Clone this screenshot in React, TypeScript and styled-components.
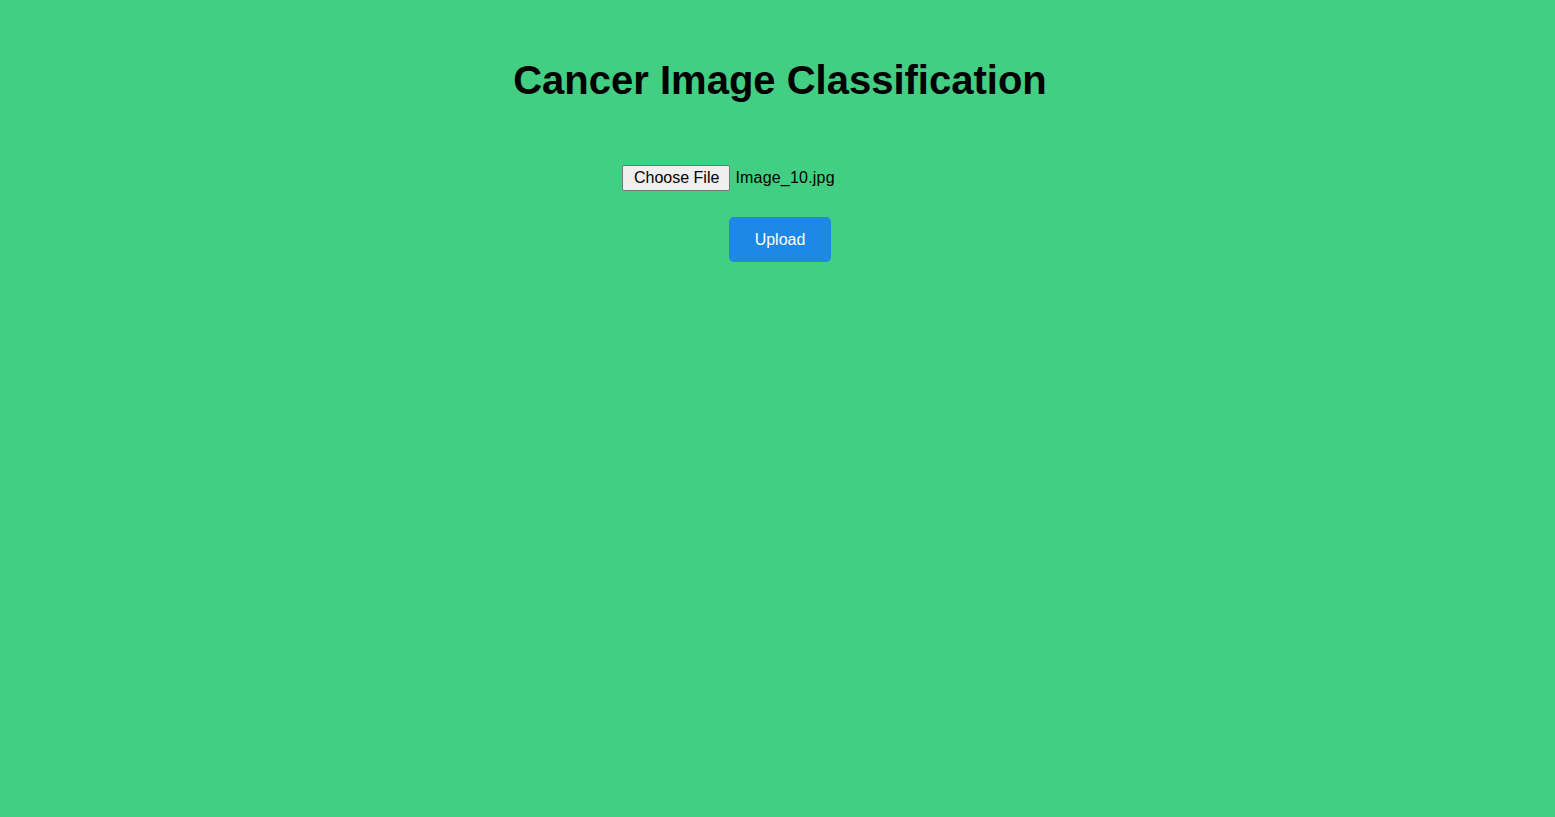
import React from "react";
import styled, { createGlobalStyle } from "styled-components";

const GlobalStyle = createGlobalStyle`
  html, body {
    margin: 0;
    padding: 0;
    background: #43cf83;
    font-family: "Liberation Sans", Arial, sans-serif;
  }
`;

const Page = styled.main`
  min-height: 817px;
  padding: 57px 0 0 5px;
  box-sizing: border-box;
  display: flex;
  flex-direction: column;
  align-items: center;
  color: #000;
`;

const Title = styled.h1`
  margin: 0;
  font-size: 40px;
  font-weight: 700;
  line-height: 46px;
`;

const Form = styled.form`
  margin-top: 62px;
  display: flex;
  flex-direction: column;
  align-items: center;
  gap: 26px;
`;

const FileRow = styled.label`
  width: 316px;
  display: flex;
  align-items: center;
  gap: 5px;
  font-size: 16px;
  cursor: default;
`;

const ChooseButton = styled.span`
  display: inline-block;
  padding: 3px 10px 3px 11px;
  line-height: 18px;
  background: #efefef;
  border: 1px solid #767676;
  border-radius: 2px;
  color: #000;
  font-size: 16px;
`;

const FileName = styled.span`
  line-height: 18px;
  letter-spacing: 0.2px;
`;

const UploadButton = styled.button`
  padding: 13px 26px;
  line-height: 19px;
  font-size: 16px;
  font-family: "Liberation Sans", Arial, sans-serif;
  color: #fff;
  background: #1e88e5;
  border: none;
  border-radius: 5px;
  cursor: pointer;
`;

export default function App() {
  return (
    <>
      <GlobalStyle />
      <Page>
        <Title>Cancer Image Classification</Title>
        <Form onSubmit={(e) => e.preventDefault()}>
          <FileRow>
            <ChooseButton>Choose File</ChooseButton>
            <FileName>Image_10.jpg</FileName>
          </FileRow>
          <UploadButton type="submit">Upload</UploadButton>
        </Form>
      </Page>
    </>
  );
}
